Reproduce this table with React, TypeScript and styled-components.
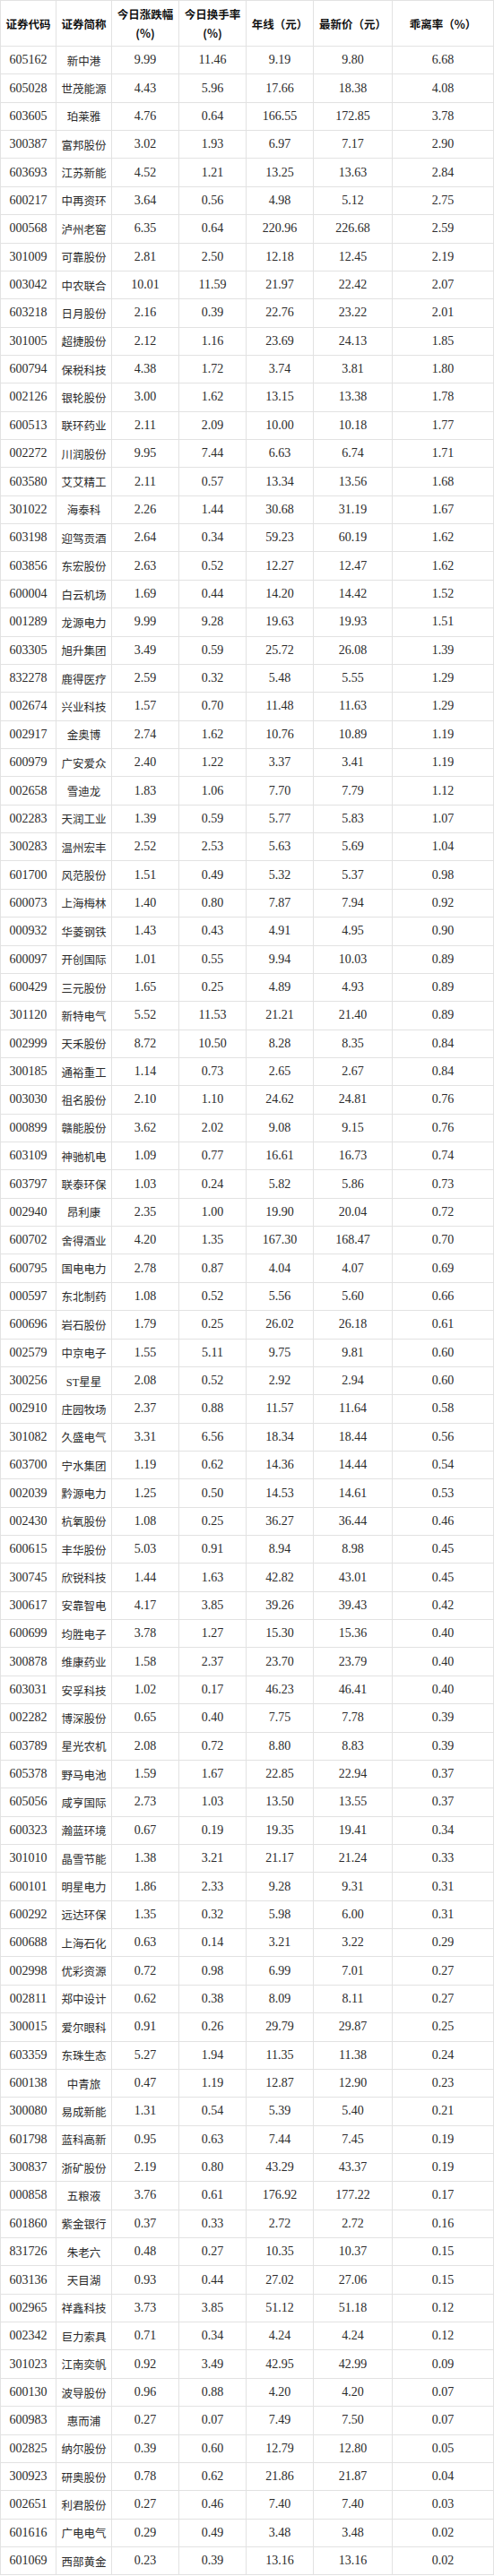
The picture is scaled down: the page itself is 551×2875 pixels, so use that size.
import React from 'react';
import styled, { createGlobalStyle } from 'styled-components';

const GlobalStyle = createGlobalStyle`
    body {
        margin: 0;
        background: #fff;
    }
`;

// 证券代码, 简称, 涨跌幅, 换手率, 年线, 最新价, 乖离率
type StockRow = [string, string, string, string, string, string, string];

const rows: StockRow[] = [
    ['605162', '新中港', '9.99', '11.46', '9.19', '9.80', '6.68'],
    ['605028', '世茂能源', '4.43', '5.96', '17.66', '18.38', '4.08'],
    ['603605', '珀莱雅', '4.76', '0.64', '166.55', '172.85', '3.78'],
    ['300387', '富邦股份', '3.02', '1.93', '6.97', '7.17', '2.90'],
    ['603693', '江苏新能', '4.52', '1.21', '13.25', '13.63', '2.84'],
    ['600217', '中再资环', '3.64', '0.56', '4.98', '5.12', '2.75'],
    ['000568', '泸州老窖', '6.35', '0.64', '220.96', '226.68', '2.59'],
    ['301009', '可靠股份', '2.81', '2.50', '12.18', '12.45', '2.19'],
    ['003042', '中农联合', '10.01', '11.59', '21.97', '22.42', '2.07'],
    ['603218', '日月股份', '2.16', '0.39', '22.76', '23.22', '2.01'],
    ['301005', '超捷股份', '2.12', '1.16', '23.69', '24.13', '1.85'],
    ['600794', '保税科技', '4.38', '1.72', '3.74', '3.81', '1.80'],
    ['002126', '银轮股份', '3.00', '1.62', '13.15', '13.38', '1.78'],
    ['600513', '联环药业', '2.11', '2.09', '10.00', '10.18', '1.77'],
    ['002272', '川润股份', '9.95', '7.44', '6.63', '6.74', '1.71'],
    ['603580', '艾艾精工', '2.11', '0.57', '13.34', '13.56', '1.68'],
    ['301022', '海泰科', '2.26', '1.44', '30.68', '31.19', '1.67'],
    ['603198', '迎驾贡酒', '2.64', '0.34', '59.23', '60.19', '1.62'],
    ['603856', '东宏股份', '2.63', '0.52', '12.27', '12.47', '1.62'],
    ['600004', '白云机场', '1.69', '0.44', '14.20', '14.42', '1.52'],
    ['001289', '龙源电力', '9.99', '9.28', '19.63', '19.93', '1.51'],
    ['603305', '旭升集团', '3.49', '0.59', '25.72', '26.08', '1.39'],
    ['832278', '鹿得医疗', '2.59', '0.32', '5.48', '5.55', '1.29'],
    ['002674', '兴业科技', '1.57', '0.70', '11.48', '11.63', '1.29'],
    ['002917', '金奥博', '2.74', '1.62', '10.76', '10.89', '1.19'],
    ['600979', '广安爱众', '2.40', '1.22', '3.37', '3.41', '1.19'],
    ['002658', '雪迪龙', '1.83', '1.06', '7.70', '7.79', '1.12'],
    ['002283', '天润工业', '1.39', '0.59', '5.77', '5.83', '1.07'],
    ['300283', '温州宏丰', '2.52', '2.53', '5.63', '5.69', '1.04'],
    ['601700', '风范股份', '1.51', '0.49', '5.32', '5.37', '0.98'],
    ['600073', '上海梅林', '1.40', '0.80', '7.87', '7.94', '0.92'],
    ['000932', '华菱钢铁', '1.43', '0.43', '4.91', '4.95', '0.90'],
    ['600097', '开创国际', '1.01', '0.55', '9.94', '10.03', '0.89'],
    ['600429', '三元股份', '1.65', '0.25', '4.89', '4.93', '0.89'],
    ['301120', '新特电气', '5.52', '11.53', '21.21', '21.40', '0.89'],
    ['002999', '天禾股份', '8.72', '10.50', '8.28', '8.35', '0.84'],
    ['300185', '通裕重工', '1.14', '0.73', '2.65', '2.67', '0.84'],
    ['003030', '祖名股份', '2.10', '1.10', '24.62', '24.81', '0.76'],
    ['000899', '赣能股份', '3.62', '2.02', '9.08', '9.15', '0.76'],
    ['603109', '神驰机电', '1.09', '0.77', '16.61', '16.73', '0.74'],
    ['603797', '联泰环保', '1.03', '0.24', '5.82', '5.86', '0.73'],
    ['002940', '昂利康', '2.35', '1.00', '19.90', '20.04', '0.72'],
    ['600702', '舍得酒业', '4.20', '1.35', '167.30', '168.47', '0.70'],
    ['600795', '国电电力', '2.78', '0.87', '4.04', '4.07', '0.69'],
    ['000597', '东北制药', '1.08', '0.52', '5.56', '5.60', '0.66'],
    ['600696', '岩石股份', '1.79', '0.25', '26.02', '26.18', '0.61'],
    ['002579', '中京电子', '1.55', '5.11', '9.75', '9.81', '0.60'],
    ['300256', 'ST星星', '2.08', '0.52', '2.92', '2.94', '0.60'],
    ['002910', '庄园牧场', '2.37', '0.88', '11.57', '11.64', '0.58'],
    ['301082', '久盛电气', '3.31', '6.56', '18.34', '18.44', '0.56'],
    ['603700', '宁水集团', '1.19', '0.62', '14.36', '14.44', '0.54'],
    ['002039', '黔源电力', '1.25', '0.50', '14.53', '14.61', '0.53'],
    ['002430', '杭氧股份', '1.08', '0.25', '36.27', '36.44', '0.46'],
    ['600615', '丰华股份', '5.03', '0.91', '8.94', '8.98', '0.45'],
    ['300745', '欣锐科技', '1.44', '1.63', '42.82', '43.01', '0.45'],
    ['300617', '安靠智电', '4.17', '3.85', '39.26', '39.43', '0.42'],
    ['600699', '均胜电子', '3.78', '1.27', '15.30', '15.36', '0.40'],
    ['300878', '维康药业', '1.58', '2.37', '23.70', '23.79', '0.40'],
    ['603031', '安孚科技', '1.02', '0.17', '46.23', '46.41', '0.40'],
    ['002282', '博深股份', '0.65', '0.40', '7.75', '7.78', '0.39'],
    ['603789', '星光农机', '2.08', '0.72', '8.80', '8.83', '0.39'],
    ['605378', '野马电池', '1.59', '1.67', '22.85', '22.94', '0.37'],
    ['605056', '咸亨国际', '2.73', '1.03', '13.50', '13.55', '0.37'],
    ['600323', '瀚蓝环境', '0.67', '0.19', '19.35', '19.41', '0.34'],
    ['301010', '晶雪节能', '1.38', '3.21', '21.17', '21.24', '0.33'],
    ['600101', '明星电力', '1.86', '2.33', '9.28', '9.31', '0.31'],
    ['600292', '远达环保', '1.35', '0.32', '5.98', '6.00', '0.31'],
    ['600688', '上海石化', '0.63', '0.14', '3.21', '3.22', '0.29'],
    ['002998', '优彩资源', '0.72', '0.98', '6.99', '7.01', '0.27'],
    ['002811', '郑中设计', '0.62', '0.38', '8.09', '8.11', '0.27'],
    ['300015', '爱尔眼科', '0.91', '0.26', '29.79', '29.87', '0.25'],
    ['603359', '东珠生态', '5.27', '1.94', '11.35', '11.38', '0.24'],
    ['600138', '中青旅', '0.47', '1.19', '12.87', '12.90', '0.23'],
    ['300080', '易成新能', '1.31', '0.54', '5.39', '5.40', '0.21'],
    ['601798', '蓝科高新', '0.95', '0.63', '7.44', '7.45', '0.19'],
    ['300837', '浙矿股份', '2.19', '0.80', '43.29', '43.37', '0.19'],
    ['000858', '五粮液', '3.76', '0.61', '176.92', '177.22', '0.17'],
    ['601860', '紫金银行', '0.37', '0.33', '2.72', '2.72', '0.16'],
    ['831726', '朱老六', '0.48', '0.27', '10.35', '10.37', '0.15'],
    ['603136', '天目湖', '0.93', '0.44', '27.02', '27.06', '0.15'],
    ['002965', '祥鑫科技', '3.73', '3.85', '51.12', '51.18', '0.12'],
    ['002342', '巨力索具', '0.71', '0.34', '4.24', '4.24', '0.12'],
    ['301023', '江南奕帆', '0.92', '3.49', '42.95', '42.99', '0.09'],
    ['600130', '波导股份', '0.96', '0.88', '4.20', '4.20', '0.07'],
    ['600983', '惠而浦', '0.27', '0.07', '7.49', '7.50', '0.07'],
    ['002825', '纳尔股份', '0.39', '0.60', '12.79', '12.80', '0.05'],
    ['300923', '研奥股份', '0.78', '0.62', '21.86', '21.87', '0.04'],
    ['002651', '利君股份', '0.27', '0.46', '7.40', '7.40', '0.03'],
    ['601616', '广电电气', '0.29', '0.49', '3.48', '3.48', '0.02'],
    ['601069', '西部黄金', '0.23', '0.39', '13.16', '13.16', '0.02'],
];

const headers: string[][] = [
    ['证券代码'],
    ['证券简称'],
    ['今日涨跌幅', '(%)'],
    ['今日换手率', '(%)'],
    ['年线（元）'],
    ['最新价（元）'],
    ['乖离率（%）'],
];

const Table = styled.div`
    width: 551px;
    border-top: 1px solid #e2e2e2;
    border-left: 1px solid #e2e2e2;
    box-sizing: border-box;
    background: #fff;
`;

const Row = styled.div<{ $header?: boolean }>`
    display: grid;
    grid-template-columns: 62px 62px 75px 75px 75px 88px 113px;
    height: ${(p) => (p.$header ? '51px' : '31.37px')};
`;

const Cell = styled.div<{ $cjk?: boolean }>`
    display: flex;
    flex-direction: column;
    align-items: center;
    justify-content: center;
    border-right: 1px solid #e2e2e2;
    border-bottom: 1px solid #e2e2e2;
    box-sizing: border-box;
    color: #2b2b2b;
    font-family: 'Liberation Serif', 'Noto Sans CJK SC', serif;
    font-size: ${(p) => (p.$cjk ? '12.5px' : '14px')};
    white-space: nowrap;
    overflow: hidden;
`;

const HeadCell = styled(Cell)`
    font-family: 'Noto Sans CJK SC', sans-serif;
    font-size: 12.5px;
    font-weight: bold;
    color: #111;
    line-height: 21px;
`;

const App = () => {
    return (
        <>
            <GlobalStyle />
            <Table>
                <Row $header>
                    {headers.map((lines) => (
                        <HeadCell key={lines[0]}>
                            {lines.map((l) => (
                                <span key={l}>{l}</span>
                            ))}
                        </HeadCell>
                    ))}
                </Row>
                {rows.map((r) => (
                    <Row key={r[0]}>
                        {r.map((v, i) => (
                            <Cell key={i} $cjk={i === 1}>
                                {v}
                            </Cell>
                        ))}
                    </Row>
                ))}
            </Table>
        </>
    );
};

export default App;
